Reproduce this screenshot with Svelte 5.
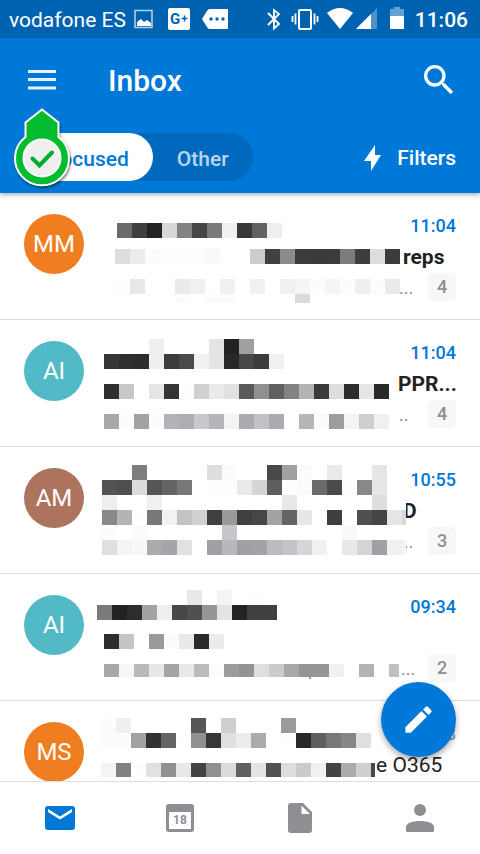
<script>
  const CELL = 15;

  // mask rows: x / y inside the message body, grey levels per cell, optional height and last cell width
  const messages = [
    {
      initials: 'MM', color: '#f07d20', time: '11:04', subject: 'reps', subjectGap: 307,
      preview: '...', previewGap: 303, count: 4, unread: true,
      mask: [
        { x: 21, y: 30, cells: '6b 3f 22 d8 82 46 7a f0 38 62 ee' },
        { x: 19, y: 56, cells: 'dd ec fc fe fe fe f9 ff ff cc 41 8b 3b 3a 3b 7c 3d dd 3c' },
        { x: 19, y: 86, tint: true, cells: 'fd e8 ff ff ea f0 ff f0 ff f0 ff f0 f5 fc f5 fc ef fc ea' },
        { x: 79, y: 101, h: 9, tint: true, cells: 'fc ff fc fc ff ff ff ff da' }
      ]
    },
    {
      initials: 'AI', color: '#52b9c6', time: '11:04', subject: 'PPR...', subjectGap: 302,
      preview: '..', previewGap: 303, count: 4, unread: true,
      mask: [
        { x: 8, y: 19, cells: 'ff ff ff ee ff ff ff e4 22 a0' },
        { x: 8, y: 34, cells: '36 2f 2c ee 3c 4a f1 e4 28 47 3b f0' },
        { x: 8, y: 64, cells: '2f c8 ff e6 35 fe d1 ea e1 59 90 60 83 b4 3a de 2d e6 29' },
        { x: 8, y: 94, tint: true, cells: 'a8 fc a2 fc b3 ae c8 b6 f4 ab c2 ab ff b6 fb 9d f4 ce f0' }
      ]
    },
    {
      initials: 'AM', color: '#ad745d', time: '10:55', subject: 'D', subjectGap: 307,
      preview: '...', previewGap: 303, count: 3, unread: true,
      mask: [
        { x: 6, y: 18, cells: 'ff ff 7d ff ff ff ff de fc ff ff 48 a0 fc ff ea ff ff e6' },
        { x: 6, y: 33, cells: '54 4f dc 56 65 78 ff fd fd ea d5 5e fe fc 6a 4a fe 88 e6' },
        { x: 6, y: 48, cells: 'ee ff ff f0 ff ff ff ff ff ff ff ff e8 ff ff ff ff ff de' },
        { x: 6, y: 63, last: 4, cells: '88 b4 fe 77 f2 c3 d1 40 9a 40 47 a3 64 e7 ff 3f ff 50 45 e5 d8' },
        { x: 6, y: 78, tint: true, cells: 'fc ff fb ff ff ff ff ff c7 ff ff ff ff ff ff ff f9' },
        { x: 6, y: 93, last: 4, tint: true, cells: 'df f4 f8 ab a5 e1 ff a0 b8 a0 a3 bb c3 d6 f1 ff e8 d4 a0 f0 f4' },
        { x: 306, y: 48, last: 4, cells: 'ff' }
      ]
    },
    {
      initials: 'AI', color: '#52b9c6', time: '09:34', subject: '', subjectGap: 0,
      preview: '...', previewGap: 305, count: 2, unread: true,
      mask: [
        { x: 1, y: 16, cells: 'ff ff ff ff ff ff e8 ff f4 ff fd' },
        { x: 1, y: 31, cells: '7a 22 2d a2 ee 47 50 96 e4 23 40 40' },
        { x: 8, y: 60, cells: '2e c5 ff 99 fb e9 2a eb' },
        { x: 8, y: 90, h: 13, last: 10, tint: true, cells: 'a8 f6 b9 e7 a4 e9 bb fd 9c 94 df cb a8 95 96 f0 ff b3 ff c0' },
        { x: 213, y: 103, h: 2, last: 2, cells: 'a0' }
      ]
    },
    {
      initials: 'MS', color: '#f07d20', time: '08:58', subject: 'le O365', subjectGap: 275,
      preview: '', previewGap: 0, count: 0, unread: false,
      mask: [
        { x: 5, y: 17, cells: 'fc ef ff ff ff ff 56 ff cf ff ff ff 9b' },
        { x: 5, y: 32, cells: 'fc fc a1 32 64 fe 90 37 e0 ec ab ff fe 29 5f 77 86 df' },
        { x: 5, y: 47, last: 4, cells: 'ff ff ff ff ff ff ff ff ff ff ff ff ff ff ff ff ff ff ff' },
        { x: 5, y: 62, h: 14, last: 4, cells: 'f4 82 fe e1 91 e8 43 90 dc 60 e3 52 dd cb f1 43 aa cf 46' }
      ]
    }
  ];

  function toCells(row) {
    const levels = row.cells.split(' ');
    return levels.map((level, i) => {
      const v = parseInt(level, 16);
      const blue = row.tint && v < 224 ? v + 4 : v;
      return {
        x: row.x + i * CELL,
        y: row.y,
        w: row.last && i === levels.length - 1 ? row.last : CELL,
        h: row.h ?? CELL,
        fill: `rgb(${v}, ${v}, ${blue})`
      };
    });
  }

  let tab = $state('focused');
</script>

<div class="app">
  <div class="status">
    <span class="carrier">vodafone ES</span>
    <svg class="left-icons" width="104" height="38" aria-hidden="true">
      <rect x="9" y="10.5" width="17" height="17" fill="none" stroke="#b9d3e8" stroke-width="1.5" />
      <path d="M11 26v-4l4-3 3 3 3-2 4 3v3z" fill="#fff" />
      <rect x="42" y="8" width="22" height="22" rx="2" fill="#fff" />
      <text x="44" y="24" class="gplus">G</text>
      <path d="M58.500 15.500v6M55.500 18.500h6" stroke="#0063b1" stroke-width="1.5" />
      <path d="M76 19l5-8q1-2 3-2h17q1 0 1 1v18q0 1-1 1H84q-2 0-3-2z" fill="#fff" />
      <circle cx="85" cy="19" r="1.7" fill="#0063b1" />
      <circle cx="91" cy="19" r="1.7" fill="#0063b1" />
      <circle cx="97" cy="19" r="1.7" fill="#0063b1" />
    </svg>
    <svg class="right-icons" width="144" height="38" aria-hidden="true">
      <path d="M5 13l11 11-5 4.500V10l5 4L5 25" fill="none" stroke="#fff" stroke-width="1.8" />
      <rect x="36" y="10" width="12" height="19" rx="1" fill="none" stroke="#fff" stroke-width="2" />
      <path d="M32.500 13.500v11M51.500 13.500v11M29.500 16v6M54.500 16v6" stroke="#fff" stroke-width="1.8" />
      <path d="M64 13q13-10 26 0L77 29z" fill="#fff" />
      <path d="M93 29L114 8v21z" fill="#4d92c8" />
      <path d="M93 29L108 14v15z" fill="#fff" />
      <path d="M127 9h4V7h6v2h4v7h-14z" fill="#66a1d0" />
      <path d="M127 16h14v13h-14z" fill="#fff" />
    </svg>
    <span class="clock">11:06</span>
  </div>

  <header class="header">
    <div class="title-bar">
      <button type="button" aria-label="Menu">
        <svg width="28" height="20" aria-hidden="true">
          <path d="M0 1.500h28M0 9.500h28M0 18h28" stroke="#e8f2fb" stroke-width="3" />
        </svg>
      </button>
      <h1>Inbox</h1>
      <button type="button" aria-label="Search">
        <svg width="40" height="40" viewBox="0 0 24 24" fill="#fff" aria-hidden="true">
          <path d="M15.500 14h-.79l-.28-.27A6.471 6.471 0 0 0 16 9.500 6.500 6.500 0 1 0 9.500 16c1.610 0 3.090-.59 4.230-1.570l.27.28v.79l5 4.990L20.490 19l-4.990-5zm-6 0C7.010 14 5 11.990 5 9.500S7.010 5 9.500 5 14 7.010 14 9.500 11.990 14 9.500 14z" />
        </svg>
      </button>
    </div>
    <div class="filter-bar">
      <div class="switch">
        <button type="button" class:active={tab === 'focused'} onclick={() => (tab = 'focused')}>Focused</button>
        <button type="button" class:active={tab === 'other'} onclick={() => (tab = 'other')}>Other</button>
      </div>
      <button class="filters" type="button">
        <svg width="17" height="27" aria-hidden="true">
          <path d="M11 0v10h6L7 26V16H0z" fill="#fff" />
        </svg>
        Filters
      </button>
    </div>
    <svg class="marker" width="64" height="86" aria-hidden="true">
      <path d="M32 3.500L48.500 16.500V31A27 27 0 1 1 15.500 31V16.500z" fill="#04bd2f" stroke="#fff" stroke-width="2" />
      <circle cx="32" cy="52" r="18.5" fill="#efefef" stroke="#fff" stroke-width="2" />
      <path d="M22.500 52.500l7 7 12.500-13" fill="none" stroke="#04ab2d" stroke-width="4" stroke-linecap="round" />
    </svg>
  </header>

  <main class="content">
    <ul class="list">
      {#each messages as message}
        <li class="message" class:unread={message.unread}>
          <span class="avatar" style="background: {message.color}">{message.initials}</span>
          <div class="body">
            <time>{message.time}</time>
            <p class="subject"><span style="width: {message.subjectGap}px"></span>{message.subject}</p>
            <div class="preview">
              <span style="width: {message.previewGap}px"></span>{message.preview}
              {#if message.count}
                <b class="count">{message.count}</b>
              {/if}
            </div>
          </div>
          <svg class="mask" width="320" height="120" shape-rendering="crispEdges" aria-hidden="true">
            {#each message.mask.flatMap(toCells) as cell}
              <rect x={cell.x} y={cell.y} width={cell.w} height={cell.h} fill={cell.fill} />
            {/each}
          </svg>
        </li>
      {/each}
    </ul>
    <button class="compose" type="button" aria-label="New message">
      <svg width="35" height="35" viewBox="0 0 24 24" fill="#fff" aria-hidden="true">
        <path d="M3 17.250V21h3.750L17.810 9.940l-3.750-3.750L3 17.250zM20.710 7.040a1 1 0 0 0 0-1.410l-2.340-2.340a1 1 0 0 0-1.410 0l-1.830 1.830 3.750 3.750 1.830-1.830z" />
      </svg>
    </button>
  </main>

  <nav class="tabs">
    <a href="#mail" class="current" aria-label="Mail">
      <svg width="36" height="36" viewBox="0 0 24 24" fill="currentColor">
        <path d="M20 4H4a2 2 0 0 0-1.990 2L2 18a2 2 0 0 0 2 2h16a2 2 0 0 0 2-2V6a2 2 0 0 0-2-2zm0 4l-8 5-8-5V6l8 5 8-5v2z" />
      </svg>
    </a>
    <a href="#calendar" aria-label="Calendar">
      <svg width="36" height="36">
        <path fill="currentColor" fill-rule="evenodd" d="M7 4h22a3 3 0 0 1 3 3v22a3 3 0 0 1-3 3H7a3 3 0 0 1-3-3V7a3 3 0 0 1 3-3zM7 12v17h22V12z" />
        <text x="18" y="24" class="day">18</text>
      </svg>
    </a>
    <a href="#files" aria-label="Files">
      <svg width="36" height="36">
        <path fill="currentColor" fill-rule="evenodd" d="M9 3h12l9 9v18a3 3 0 0 1-3 3H9a3 3 0 0 1-3-3V6a3 3 0 0 1 3-3zM19.500 5.500V14H28z" />
      </svg>
    </a>
    <a href="#people" aria-label="People">
      <svg width="36" height="36" fill="currentColor">
        <circle cx="18" cy="10" r="6" />
        <path d="M4 27c0-4 7-6 14-6s14 2 14 6v4q0 1-1 1H5q-1 0-1-1z" />
      </svg>
    </a>
  </nav>
</div>

<style>
  :global(body) {
    background: #fff;
  }

  .app {
    display: flex;
    flex-direction: column;
    height: 100vh;
    overflow: hidden;
    font-family: Roboto, 'Liberation Sans', sans-serif;
    color: #222;
  }

  button {
    border: none;
    background: none;
    padding: 0;
    font: inherit;
    color: inherit;
    cursor: pointer;
  }

  svg {
    display: block;
    flex: none;
  }

  /* status bar */
  .status {
    display: flex;
    align-items: center;
    flex: none;
    height: 38px;
    padding: 2px 12px 0 9px;
    box-sizing: border-box;
    background: #0063b1;
    color: #fff;
    font-size: 21px;
  }

  .status svg {
    margin-top: -2px;
  }

  .status .right-icons {
    margin-left: auto;
  }

  .gplus {
    font-size: 15px;
    font-weight: 700;
    fill: #0063b1;
  }

  .clock {
    margin-left: 8px;
    font-weight: 500;
  }

  /* header */
  .header {
    position: relative;
    z-index: 2;
    flex: none;
    background: #0078d7;
    color: #fff;
    box-shadow: 0 2px 4px rgba(0, 0, 0, 0.3);
  }

  .title-bar {
    display: flex;
    align-items: center;
    height: 84px;
    padding: 0 21px 0 28px;
  }

  h1 {
    flex: 1;
    margin: 0 0 0 52px;
    font-size: 30px;
    font-weight: 500;
  }

  .filter-bar {
    display: flex;
    align-items: center;
    justify-content: space-between;
    padding: 11px 24px 12px;
    font-size: 21px;
    font-weight: 500;
  }

  .switch {
    display: flex;
    border-radius: 24px;
    background: #0069bd;
  }

  .switch button {
    height: 48px;
    padding: 3px 24px 0;
    border-radius: 24px;
    color: #b8d6ef;
  }

  .switch .active {
    padding-left: 25px;
    background: #fff;
    color: #0078d7;
  }

  .filters {
    display: flex;
    align-items: center;
    gap: 16px;
    padding-top: 2px;
  }

  .marker {
    position: absolute;
    left: 10px;
    top: 68px;
    filter: drop-shadow(1px 2px 1px rgba(0, 0, 0, 0.45));
  }

  /* messages */
  .content {
    position: relative;
    flex: 1;
    min-height: 0;
  }

  .list {
    height: 100%;
    margin: 0;
    padding: 0;
    overflow: hidden;
    list-style: none;
  }

  .message {
    position: relative;
    display: flex;
    gap: 12px;
    padding: 21px 24px;
    border-bottom: 1px solid #dedede;
  }

  .avatar {
    flex: none;
    width: 60px;
    height: 60px;
    border-radius: 50%;
    color: #fff;
    font-size: 24px;
    line-height: 60px;
    text-align: center;
  }

  .body {
    flex: 1;
    min-width: 0;
  }

  time {
    display: block;
    color: #8e8e93;
    font-size: 18px;
    line-height: 24px;
    text-align: right;
  }

  .subject {
    display: flex;
    min-height: 38px;
    margin: 0;
    font-size: 21px;
    line-height: 38px;
    white-space: pre;
  }

  .subject span,
  .preview span {
    flex: none;
  }

  .unread time {
    color: #0078d7;
    font-weight: 500;
  }

  .unread .subject {
    font-weight: 700;
  }

  .preview {
    display: flex;
    align-items: center;
    height: 22px;
    color: #8e8e93;
    font-size: 18px;
  }

  .count {
    width: 28px;
    margin-left: auto;
    border-radius: 5px;
    background: #f7f7f7;
    font-weight: 500;
    line-height: 28px;
    text-align: center;
  }

  /* pixelated cover over the private text */
  .mask {
    position: absolute;
    left: 96px;
    top: 0;
  }

  .compose {
    position: absolute;
    right: 24px;
    bottom: 24px;
    display: grid;
    place-items: center;
    width: 75px;
    height: 75px;
    border-radius: 50%;
    background: #0078d7;
    box-shadow: 0 3px 6px rgba(0, 0, 0, 0.35);
  }

  /* bottom navigation */
  .tabs {
    display: flex;
    flex: none;
    height: 72px;
    border-top: 1px solid #dedede;
    background: #fff;
  }

  .tabs a {
    display: grid;
    flex: 1;
    place-items: center;
    color: #8e8e93;
  }

  .tabs .current {
    color: #0078d7;
  }

  .day {
    font-size: 12px;
    font-weight: 700;
    text-anchor: middle;
    fill: currentColor;
  }
</style>
